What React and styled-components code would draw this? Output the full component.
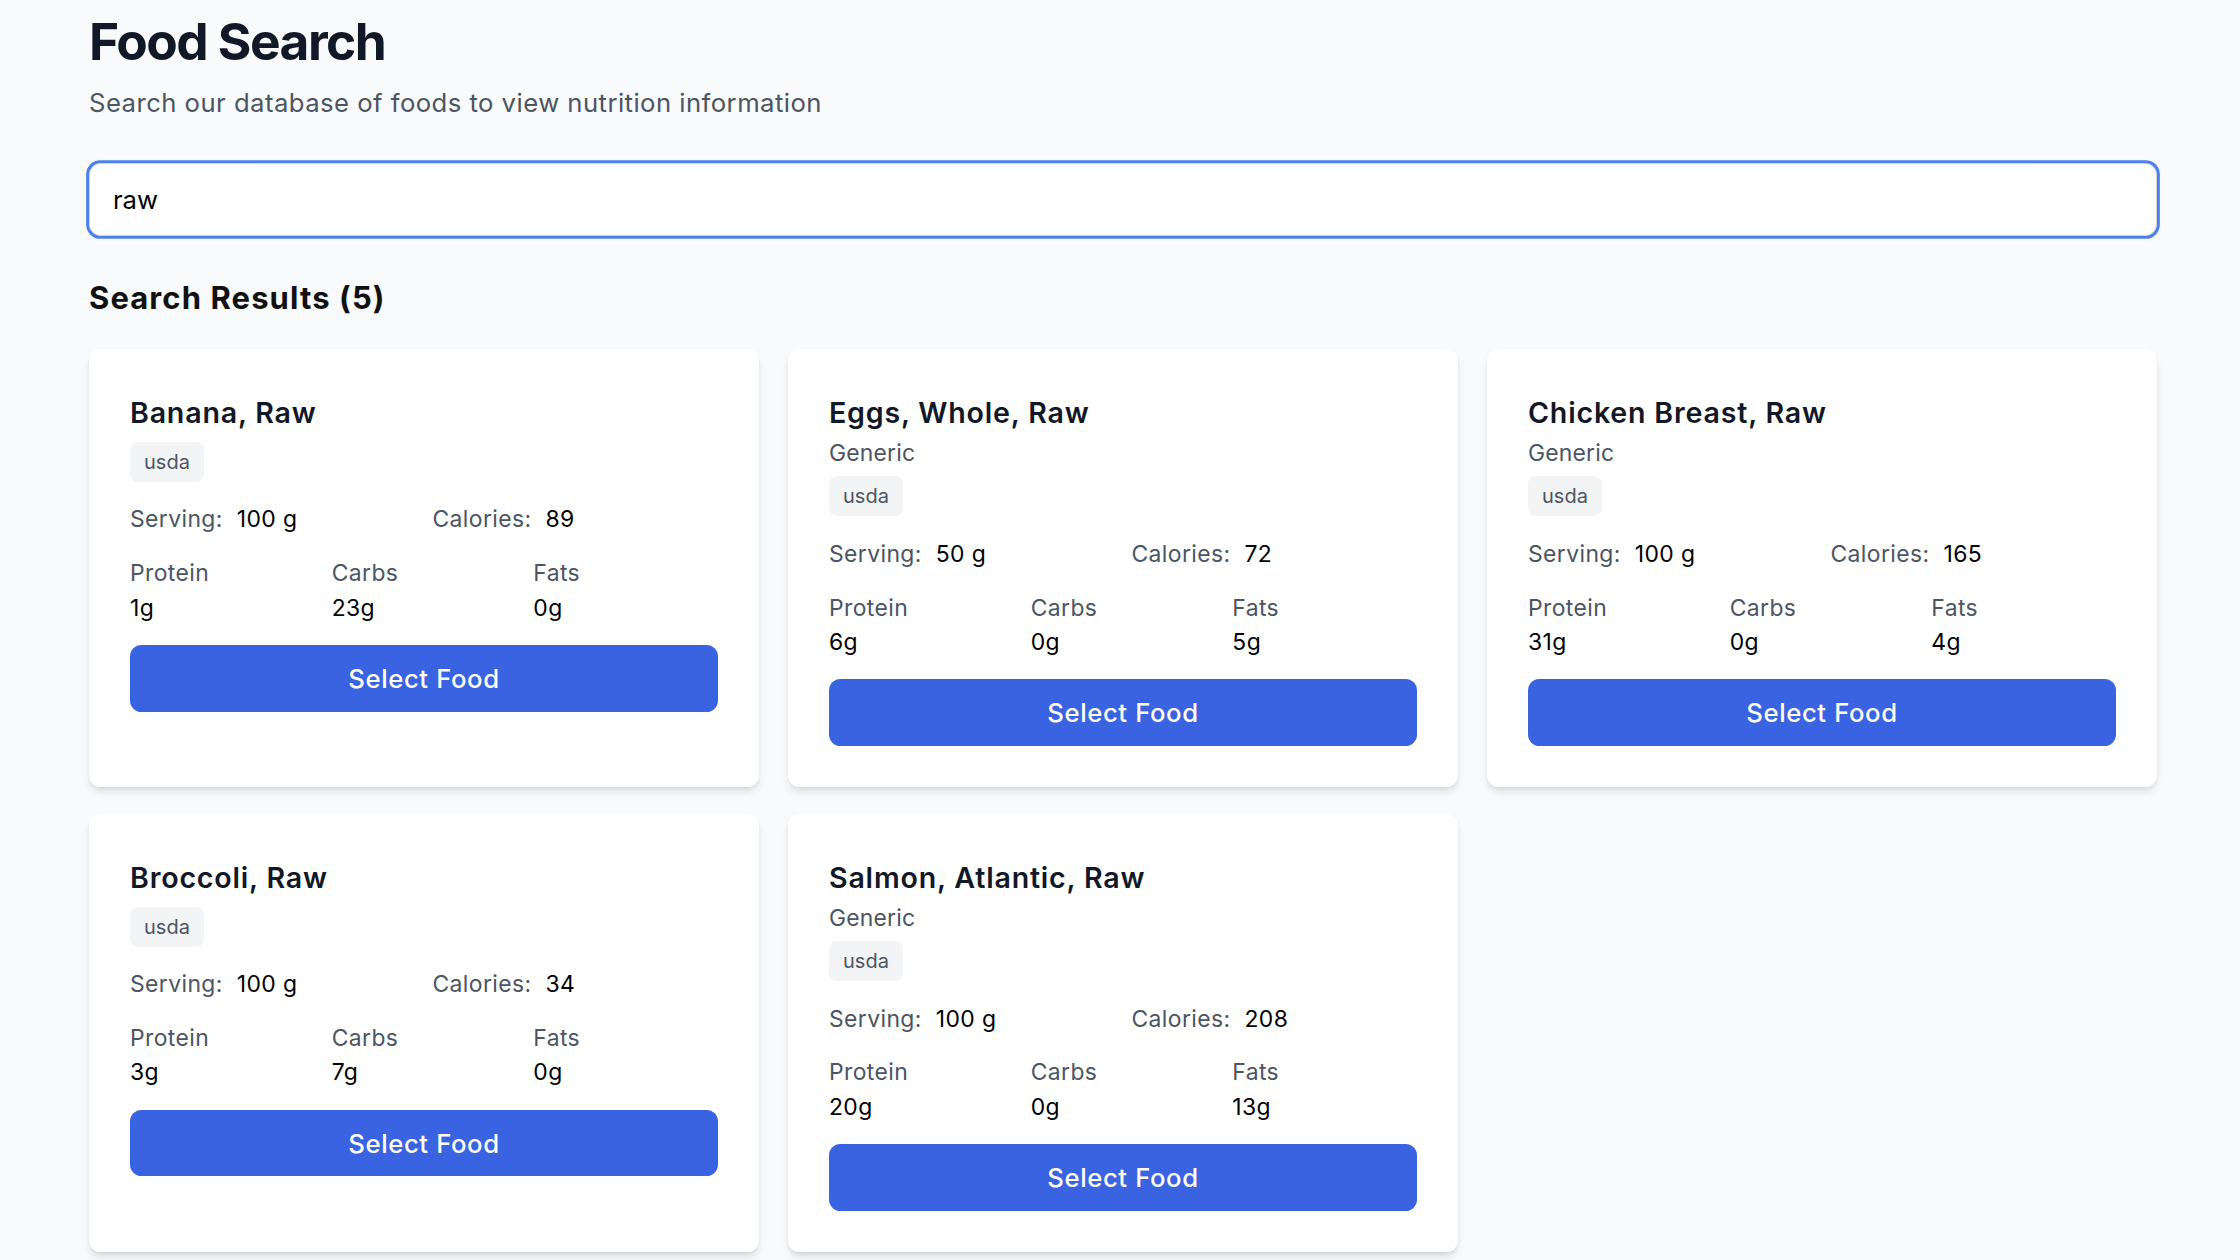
import styled, { createGlobalStyle } from 'styled-components';

const GlobalStyle = createGlobalStyle`
  html, body {
    margin: 0;
    padding: 0;
    background: #f9fafb;
    font-family: Inter, "Noto Sans", "Liberation Sans", sans-serif;
  }
  * {
    box-sizing: border-box;
  }
`;

const Page = styled.div`
  padding: 13px 83px 60px 89px;
`;

const Title = styled.h1`
  margin: 0;
  font-size: 51.4px;
  line-height: 57px;
  font-weight: 700;
  color: #111827;
  letter-spacing: -1.5px;
`;

const Subtitle = styled.p`
  margin: 12.6px 0 0;
  font-size: 25.7px;
  line-height: 40px;
  color: #4b5563;
  letter-spacing: 0.45px;
`;

const SearchInput = styled.input`
  display: block;
  width: 100%;
  height: 73px;
  margin-top: 40.4px;
  padding: 0 22.9px;
  font-family: inherit;
  font-size: 25.7px;
  color: #000;
  background: #fff;
  border: 1.43px solid #d1d5db;
  border-radius: 11.4px;
  box-shadow: 0 0 0 2.86px #4c81ec;
  outline: none;
  caret-color: #000;
`;

const ResultsHeading = styled.h2`
  margin: 41.6px 0 31.4px;
  font-size: 31px;
  line-height: 40px;
  font-weight: 700;
  color: #111;
  letter-spacing: 1.1px;
`;

const Grid = styled.div`
  display: grid;
  grid-template-columns: repeat(3, 1fr);
  gap: 27px 29px;
`;

const Card = styled.div`
  display: flex;
  flex-direction: column;
  background: #fff;
  border-radius: 11.4px;
  padding: 44px 41px 41px;
  box-shadow: 0 5.7px 8.6px -1.4px rgba(0, 0, 0, 0.1),
    0 2.9px 5.7px -2.9px rgba(0, 0, 0, 0.1);
`;

const FoodName = styled.h3`
  margin: 0 0 3px;
  font-size: 28.6px;
  line-height: 40px;
  font-weight: 600;
  color: #111827;
  letter-spacing: 0.8px;
`;

const Brand = styled.div`
  font-size: 22.9px;
  line-height: 34.3px;
  color: #4b5563;
  letter-spacing: 0.2px;
`;

const Badge = styled.span`
  align-self: flex-start;
  margin-top: 6px;
  height: 40px;
  padding: 0 14px;
  line-height: 40px;
  font-size: 20px;
  color: #4b5563;
  background: #f3f4f6;
  border-radius: 8px;
`;

const StatsRow = styled.div`
  display: grid;
  grid-template-columns: repeat(${(p) => p.cols}, 1fr);
  gap: 17px;
  margin-top: ${(p) => p.top}px;
  font-size: 22.9px;
  line-height: 34.3px;
  letter-spacing: 0.4px;
`;

const Label = styled.span`
  color: #4b5563;
  margin-right: ${(p) => (p.inline ? '14px' : '0')};
`;

const Value = styled.span`
  color: #000;
`;

const Macro = styled.div`
  display: flex;
  flex-direction: column;
`;

const SelectButton = styled.button`
  margin-top: 20px;
  width: 100%;
  height: 66.7px;
  border: none;
  border-radius: 11.4px;
  background: #3a63e1;
  color: #fff;
  font-family: inherit;
  font-size: 25.7px;
  font-weight: 500;
  letter-spacing: 0.6px;
  cursor: pointer;

  &:hover {
    background: #2f55cc;
  }
`;

const foods = [
  { name: 'Banana, Raw', serving: '100 g', calories: 89, protein: 1, carbs: 23, fats: 0 },
  { name: 'Eggs, Whole, Raw', brand: 'Generic', serving: '50 g', calories: 72, protein: 6, carbs: 0, fats: 5 },
  { name: 'Chicken Breast, Raw', brand: 'Generic', serving: '100 g', calories: 165, protein: 31, carbs: 0, fats: 4 },
  { name: 'Broccoli, Raw', serving: '100 g', calories: 34, protein: 3, carbs: 7, fats: 0 },
  { name: 'Salmon, Atlantic, Raw', brand: 'Generic', serving: '100 g', calories: 208, protein: 20, carbs: 0, fats: 13 },
];

function FoodCard({ food }) {
  return (
    <Card>
      <FoodName>{food.name}</FoodName>
      {food.brand && <Brand>{food.brand}</Brand>}
      <Badge>usda</Badge>
      <StatsRow cols={2} top={20.5}>
        <div>
          <Label inline>Serving:</Label>
          <Value>{food.serving}</Value>
        </div>
        <div>
          <Label inline>Calories:</Label>
          <Value>{food.calories}</Value>
        </div>
      </StatsRow>
      <StatsRow cols={3} top={19.5}>
        <Macro>
          <Label>Protein</Label>
          <Value>{food.protein}g</Value>
        </Macro>
        <Macro>
          <Label>Carbs</Label>
          <Value>{food.carbs}g</Value>
        </Macro>
        <Macro>
          <Label>Fats</Label>
          <Value>{food.fats}g</Value>
        </Macro>
      </StatsRow>
      <SelectButton>Select Food</SelectButton>
    </Card>
  );
}

export default function App() {
  return (
    <>
      <GlobalStyle />
      <Page>
        <Title>Food Search</Title>
        <Subtitle>Search our database of foods to view nutrition information</Subtitle>
        <SearchInput type="text" defaultValue="raw" autoFocus />
        <ResultsHeading>Search Results ({foods.length})</ResultsHeading>
        <Grid>
          {foods.map((food) => (
            <FoodCard key={food.name} food={food} />
          ))}
        </Grid>
      </Page>
    </>
  );
}
